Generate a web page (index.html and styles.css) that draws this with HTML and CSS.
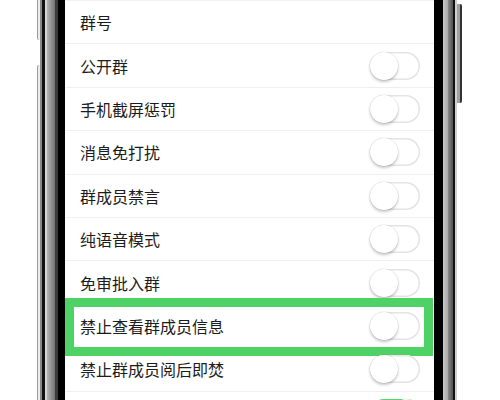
FILE: index.html
```html
<!DOCTYPE html>
<html lang="zh-CN">
<head>
  <meta charset="UTF-8">
  <meta name="viewport" content="width=device-width, initial-scale=1.0">
  <title>群设置</title>
  <link rel="stylesheet" href="styles.css">
</head>
<body>
  <div class="phone">
    <div class="side-left">
      <div class="side-btn top"></div>
      <div class="side-btn rest"></div>
    </div>
    <div class="bezel-left"></div>
    <div class="screen">
      <div class="settings">
        <div class="row"><span class="label">群号</span></div>
        <div class="row"><span class="label">公开群</span><span class="switch"><span class="knob"></span></span></div>
        <div class="row"><span class="label">手机截屏惩罚</span><span class="switch"><span class="knob"></span></span></div>
        <div class="row"><span class="label">消息免打扰</span><span class="switch"><span class="knob"></span></span></div>
        <div class="row"><span class="label">群成员禁言</span><span class="switch"><span class="knob"></span></span></div>
        <div class="row"><span class="label">纯语音模式</span><span class="switch"><span class="knob"></span></span></div>
        <div class="row"><span class="label">免审批入群</span><span class="switch"><span class="knob"></span></span></div>
        <div class="row highlighted"><span class="label">禁止查看群成员信息</span><span class="switch"><span class="knob"></span></span></div>
        <div class="row"><span class="label">禁止群成员阅后即焚</span><span class="switch"><span class="knob"></span></span></div>
        <div class="row"><span class="label"></span><span class="switch on"><span class="knob"></span></span></div>
      </div>
    </div>
    <div class="bezel-right"></div>
    <div class="side-right">
      <div class="power-btn"></div>
    </div>
  </div>
</body>
</html>
```

FILE: styles.css
```css
body, html {
  padding: 0;
  margin: 0;
}
body {
  background-color: #fff;
  font-family: "Noto Sans CJK SC", "Noto Sans", sans-serif;
  overflow: hidden;
  height: 400px;
}

.phone {
  display: flex;
  height: 400px;
  padding-left: 37px;
}

/* volume buttons on the left edge */
.side-left {
  width: 3px;
  display: flex;
  flex-direction: column;
  gap: 25px;
}
.side-btn {
  background-color: #ececec;
  border-left: 1px solid #999;
}
.side-btn.top {
  height: 40px;
  border-bottom-left-radius: 2px;
}
.side-btn.rest {
  flex-grow: 1;
  border-top-left-radius: 2px;
}

.bezel-left {
  width: 25px;
  background: linear-gradient(to right,
    #888 0, #888 2px,
    #111 2px, #111 5px,
    #d4d4d4 5px, #d4d4d4 7px,
    #b5b5b5 7px, #727272 15px,
    #3a3a3a 15px, #3a3a3a 18px,
    #000 18px);
}

.screen {
  width: 369px;
  background-color: #fff;
  overflow: hidden;
}

.settings {
  border-top: 1px solid #f1f1f1;
}

.row {
  position: relative;
  box-sizing: border-box;
  height: 43.4px;
  display: flex;
  align-items: center;
  justify-content: space-between;
  padding: 0 14px 0 15px;
  border-bottom: 1px solid #efefef;
}
.label {
  font-size: 16px;
  color: #1c1c1c;
}

.highlighted::after {
  content: "";
  position: absolute;
  top: -7px;
  bottom: -9px;
  left: 0;
  right: 1px;
  border: 9px solid #4fd265;
  pointer-events: none;
}

.switch {
  width: 50px;
  height: 28px;
  border-radius: 14px;
  background-color: #fff;
  box-shadow: inset 0 0 0 1.5px #e4e4e4;
  display: flex;
  align-items: center;
}
.knob {
  width: 28px;
  height: 28px;
  border-radius: 50%;
  background-color: #fff;
  box-shadow: 0 2px 3px rgba(0, 0, 0, 0.22), 0 0 0 0.5px rgba(0, 0, 0, 0.1);
}
.switch.on {
  background-color: #4cd964;
  box-shadow: none;
  justify-content: flex-end;
}

.bezel-right {
  width: 21px;
  background: linear-gradient(to right,
    #000 0, #000 9px,
    #cacaca 9px, #a8a8a8 14px,
    #8a8a8a 14px, #555 18.5px,
    #111 18.5px);
}

.side-right {
  width: 7px;
  border-left: 2px solid #cfcfcf;
  box-sizing: border-box;
}
.power-btn {
  margin-top: 4px;
  height: 99px;
  background-color: #a0a0a0;
  border-right: 2px solid #333;
  border-radius: 0 2px 2px 0;
}
```
